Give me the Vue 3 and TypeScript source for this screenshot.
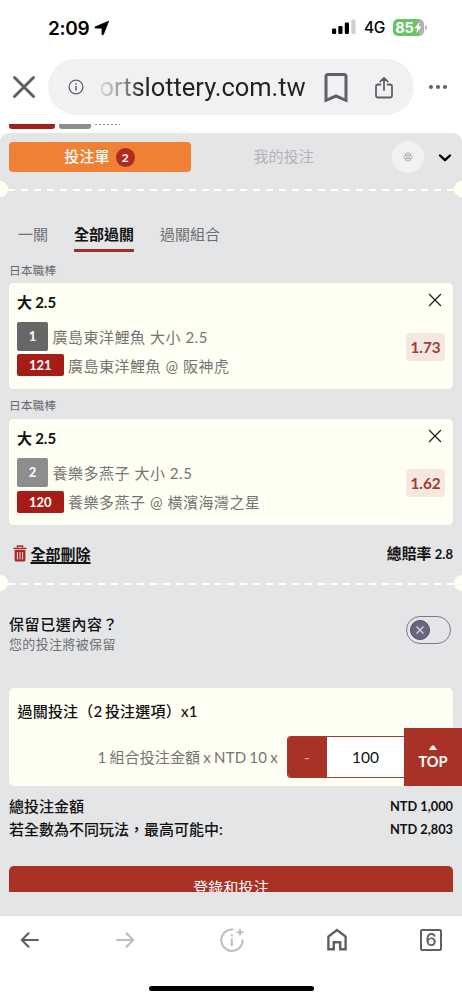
<script setup lang="ts">
interface Pick {
  league: string
  title: string
  no: string
  shade: 'dark' | 'light'
  selection: string
  code: string
  match: string
  odds: string
}

const tabs = ['一關', '全部過關', '過關組合']
const activeTab = '全部過關'

const picks: Pick[] = [
  { league: '日本職棒', title: '大 2.5', no: '1', shade: 'dark', selection: '廣島東洋鯉魚 大小 2.5', code: '121', match: '廣島東洋鯉魚 @ 阪神虎', odds: '1.73' },
  { league: '日本職棒', title: '大 2.5', no: '2', shade: 'light', selection: '養樂多燕子 大小 2.5', code: '120', match: '養樂多燕子 @ 橫濱海灣之星', odds: '1.62' },
]

const totals = [
  { label: '總投注金額', value: 'NTD 1,000' },
  { label: '若全數為不同玩法，最高可能中:', value: 'NTD 2,803' },
]
</script>

<template>
  <div class="screen">
    <header class="status">
      <div class="clock">
        <span>2:09</span>
        <svg width="16" height="16" viewBox="0 0 16 16"><path d="M14.6 1.2 9.3 14.6c-.3.6-1.2.5-1.3-.2V8.1H1.6c-.8 0-.9-1-.2-1.300L14.600 1.200Z" fill="#000" stroke="#000" stroke-width=".8" stroke-linejoin="round" /></svg>
      </div>
      <div class="signals">
        <svg width="24" height="16" viewBox="0 0 24 16">
          <rect x="0" y="9.500" width="4.200" height="5.500" rx="1.200" />
          <rect x="6.300" y="7" width="4.200" height="8" rx="1.200" />
          <rect x="12.800" y="3.600" width="4.200" height="11.400" rx="1.200" />
          <rect x="19.300" y="0.500" width="4.200" height="14.500" rx="1.200" fill="#cfcfcf" />
        </svg>
        <span class="network">4G</span>
        <div class="battery">
          <span>85</span>
          <svg width="8" height="13" viewBox="0 0 8 13"><path d="M5.600 .6.5 7.200h2.700l-.9 5.200 5.200-6.800H4.700z" fill="#fff" /></svg>
        </div>
        <i class="battery-tip"></i>
      </div>
    </header>

    <div class="address">
      <svg class="close" width="24" height="24" viewBox="0 0 24 24"><path d="M2.500 2.500l19 19M21.500 2.500l-19 19" stroke="#5f6063" stroke-width="3" stroke-linecap="round" /></svg>
      <div class="pill">
        <svg width="16" height="16" viewBox="0 0 16 16" fill="none" stroke="#5f6063"><circle cx="8" cy="8" r="6.900" stroke-width="1.300" /><path d="M8 7v4.600M8 4.200v1.500" stroke-width="1.500" /></svg>
        <span class="url">ortslottery.com.tw</span>
        <svg class="bookmark" width="26" height="32" viewBox="0 0 26 32" fill="none" stroke="#5f6063" stroke-width="3"><path d="M3 28.300V4.500Q3 2.500 5 2.500h16q2 0 2 2v23.800L13 24z" /></svg>
        <svg class="share" width="20" height="24" viewBox="0 0 20 24" fill="none" stroke="#5f6063" stroke-width="1.800" stroke-linecap="round" stroke-linejoin="round"><path d="M6.500 8.500H4Q2 8.500 2 10.500v9q0 2 2 2h12q2 0 2-2v-9q0-2-2-2h-2.500M10 14V2.300M6.200 5.600L10 1.800l3.800 3.800" /></svg>
      </div>
      <div class="dots"><i></i><i></i><i></i></div>
    </div>

    <main class="page">
      <div class="behind">
        <i class="chip red"></i><i class="chip gray"></i><i class="sliver"></i>
      </div>

      <section class="slip">
        <div class="top-tabs">
          <button class="slip-tab"><span>投注單</span><b>2</b></button>
          <span class="my-bets">我的投注</span>
          <span class="gear">
            <svg width="10" height="10" viewBox="0 0 10 10" fill="none" stroke="#a2a4a7" stroke-width=".8"><path d="M3.200 1.200h3.600L9.200 5 6.800 8.800H3.200L.8 5zM1.500 3.200h7M1.500 6.800h7" /><circle cx="5" cy="5" r="1.400" /></svg>
          </span>
          <svg class="chevron" width="14" height="10" viewBox="0 0 14 10" fill="none" stroke="#000" stroke-width="2.400" stroke-linecap="round" stroke-linejoin="round"><path d="M2 2.500l5 4.700 5-4.700" /></svg>
        </div>

        <div class="perforation"></div>

        <nav class="modes">
          <span v-for="tab in tabs" :key="tab" :class="{ active: tab === activeTab }">{{ tab }}</span>
        </nav>

        <template v-for="pick in picks" :key="pick.code">
          <div class="league">{{ pick.league }}</div>
          <article class="card">
            <div class="card-main">
              <h3>{{ pick.title }}</h3>
              <div class="line"><span class="num" :class="pick.shade">{{ pick.no }}</span>{{ pick.selection }}</div>
              <div class="line second"><span class="code">{{ pick.code }}</span>{{ pick.match }}</div>
            </div>
            <div class="card-side">
              <svg width="14" height="14" viewBox="0 0 14 14"><path d="M1 1l12 12M13 1L1 13" stroke="#222" stroke-width="1.300" /></svg>
              <span class="odds">{{ pick.odds }}</span>
            </div>
          </article>
        </template>

        <div class="summary">
          <svg width="14" height="17" viewBox="0 0 14 17"><path d="M4.500 2.600V1h5v1.600M.5 3.400h13" fill="none" stroke="#a62a25" stroke-width="1.500" /><path d="M1.600 5h10.800v10q0 1.500-1.500 1.500H3.100Q1.600 16.500 1.600 15z" fill="#a62a25" /><path d="M4.400 7v7.500M7 7v7.500M9.600 7v7.500" stroke="#eee4e4" /></svg>
          <a>全部刪除</a>
          <b>總賠率 <span>2.8</span></b>
        </div>

        <div class="perforation"></div>

        <div class="keep">
          <div>
            <strong>保留已選內容？</strong>
            <p>您的投注將被保留</p>
          </div>
          <div class="toggle">
            <span><svg width="10" height="10" viewBox="0 0 10 10"><path d="M1.500 1.500l7 7M8.500 1.500l-7 7" stroke="#d9d9e4" stroke-width="1.200" /></svg></span>
          </div>
        </div>

        <div class="stake-card">
          <h4>過關投注（2 投注選項）x1</h4>
          <div class="stake">
            <span class="formula">1 組合投注金額 x NTD 10 x</span>
            <div class="stepper"><button>-</button><span>100</span></div>
          </div>
          <div class="to-top">
            <svg width="8" height="5" viewBox="0 0 8 5"><path d="M0 5Q.5 4 2.700 1 4-.6 5.300 1L8 5z" fill="#fff" /></svg>
            <span>TOP</span>
          </div>
        </div>

        <dl class="totals">
          <div v-for="row in totals" :key="row.label"><dt>{{ row.label }}</dt><dd>{{ row.value }}</dd></div>
        </dl>

        <div class="login-clip"><button class="login">登錄和投注</button></div>
      </section>
    </main>

    <footer class="toolbar">
      <div class="tools">
        <svg width="20" height="18" viewBox="0 0 20 18" fill="none" stroke="#5f6063" stroke-width="2.100" stroke-linecap="round" stroke-linejoin="round"><path d="M18 9H2M8.500 2.300L1.800 9l6.700 6.700" /></svg>
        <svg width="20" height="18" viewBox="0 0 20 18" fill="none" stroke="#bdbdbf" stroke-width="2.100" stroke-linecap="round" stroke-linejoin="round"><path d="M2 9h16M11.500 2.300L18.200 9l-6.700 6.700" /></svg>
        <svg width="26" height="26" viewBox="0 0 26 26" fill="none" stroke="#bdbdbf" stroke-width="2"><path d="M13.500 2.500A10.700 10.700 0 1 0 23.700 13.300" stroke-linecap="round" /><path d="M12.800 11.500v7.500M12.800 7v2.500" /><path d="M21 1l1.300 3L25.500 5.300l-3.200 1.300L21 9.800l-1.300-3.200-3.200-1.300L19.700 4z" fill="#bdbdbf" stroke="none" /></svg>
        <svg width="22" height="24" viewBox="0 0 22 24" fill="none" stroke="#5f6063" stroke-width="2.400"><path d="M2.400 21.300V8.500L11 2l8.600 6.500v12.800h-5.400v-7H7.800v7z" /></svg>
        <span class="tab-count">6</span>
      </div>
      <div class="home-bar"></div>
    </footer>
  </div>
</template>

<style>
body { margin: 0; }
</style>

<style scoped>
.screen { width: 462px; height: 1000px; display: flex; flex-direction: column; overflow: hidden; background: #fff; font-family: Lato, "Noto Sans CJK TC", sans-serif; color: #111; }
.screen * { box-sizing: border-box; }
svg { display: block; flex: none; }
button { border: 0; padding: 0; font: inherit; color: inherit; }
h3, h4, p, dl, dd { margin: 0; }

.status { height: 59px; flex: none; display: flex; justify-content: space-between; padding: 17px 35px 0 48px; font-family: Inter, sans-serif; color: #000; }
.clock { display: flex; align-items: center; gap: 5px; height: 22px; font-size: 19px; font-weight: 600; letter-spacing: -.35px; }
.signals { display: flex; align-items: center; height: 20px; }
.network { margin-left: 8px; width: 22px; font-size: 15.500px; font-weight: 500; letter-spacing: -.4px; }
.battery { margin-left: 7px; width: 31px; height: 17px; border-radius: 5px; display: flex; align-items: center; justify-content: center; background: linear-gradient(90deg, #69c466 84%, #b1b1b3 84%); color: #fff; font-size: 14.500px; font-weight: 700; }
.battery span { letter-spacing: -.2px; }
.battery-tip { width: 2px; height: 5px; margin-left: 1px; border-radius: 0 2px 2px 0; background: #b8b8ba; }

.address { height: 56px; flex: none; display: flex; align-items: center; padding-left: 11.500px; }
.pill { margin-left: 12px; width: 366.500px; height: 56px; border-radius: 28px; background: #f0f1f3; display: flex; align-items: center; padding-left: 20px; }
.url { margin-left: 16px; width: 209px; white-space: nowrap; font-family: Roboto, sans-serif; font-size: 25.500px; line-height: 36px; letter-spacing: -.05px; background: linear-gradient(90deg, #dadbdd 0, #8d8e90 24px, #222 42px); -webkit-background-clip: text; background-clip: text; color: transparent; }
.bookmark { margin-left: 14.500px; margin-top: 1px; }
.share { margin-left: 25px; margin-top: 1px; }
.dots { display: flex; gap: 3px; margin-left: 15px; }
.dots i { width: 4px; height: 4px; border-radius: 50%; background: #5f6063; }

.page { height: 800px; flex: none; display: flex; flex-direction: column; }
.behind { height: 18px; flex: none; display: flex; gap: 4px; padding: 9px 0 0 8.500px; }
.chip { height: 4.500px; border-radius: 0 0 3px 3px; }
.red { width: 46.500px; background: #a3211c; }
.gray { width: 31.500px; background: #8d8d8d; }
.sliver { width: 25px; height: 1px; background: repeating-linear-gradient(90deg, #999 0 2px, #fff 2px 4px); }
.slip { flex: 1; background: #e4e5e7; border-radius: 9px 9px 0 0; display: flex; flex-direction: column; }

.top-tabs { height: 48px; flex: none; display: flex; align-items: center; padding-left: 8.500px; }
.slip-tab { width: 182px; height: 30px; border-radius: 4px; background: #ee8133; color: #fff; font-size: 15px; font-weight: 500; letter-spacing: .2px; display: flex; align-items: center; justify-content: center; gap: 6px; }
.slip-tab > span { margin-top: -3px; }
.slip-tab b { width: 19px; height: 19px; border-radius: 50%; background: #b02a20; font-size: 12px; line-height: 19px; text-align: center; letter-spacing: 0; }
.my-bets { margin-left: 63px; margin-top: -3px; width: 62px; color: #b2b3b5; font-size: 15px; letter-spacing: .1px; white-space: nowrap; }
.gear { margin-left: 76px; width: 32px; height: 32px; border-radius: 50%; background: #f1f2f3; display: grid; place-items: center; }
.chevron { margin-left: 14.500px; margin-top: 1px; }

.perforation { height: 16px; flex: none; background: radial-gradient(circle at 0 50%, #fffff4 7.700px, transparent 8.300px), radial-gradient(circle at 100% 50%, #fffff4 7.700px, transparent 8.300px), repeating-linear-gradient(90deg, #fff 0 7px, transparent 7px 12.900px) 8px 8px / 446px 2px no-repeat; }

.modes { height: 65px; flex: none; display: flex; align-items: flex-start; gap: 26px; padding: 22px 0 0 18px; font-size: 15px; color: #6d6e70; line-height: 30px; }
.modes span { height: 33px; }
.modes .active { font-weight: 700; color: #111; border-bottom: 3px solid #a62c26; }
.league { height: 30.400px; flex: none; padding: 8px 0 0 9px; font-size: 11.800px; line-height: 18px; color: #6a6b6d; }
.modes + .league { height: 21px; padding-top: 0; margin-top: -.2px; }
.card { height: 106px; flex: none; margin: 0 9px; padding: 8px 8px 0 8px; border-radius: 5px; background: #fffff4; display: flex; justify-content: space-between; }
.card h3 { height: 22px; line-height: 22px; font-size: 15px; font-weight: 700; word-spacing: -.5px; }
.line { display: flex; align-items: center; height: 29px; margin-top: 9px; font-size: 15px; letter-spacing: .52px; white-space: nowrap; color: #747572; }
.line.second { height: 22px; margin-top: 3.500px; }
.num, .code { color: #fff; text-align: center; font-weight: 700; border-radius: 2px; letter-spacing: 0; }
.num { width: 31px; height: 29px; line-height: 29px; font-size: 13px; margin-right: 4.500px; }
.num.dark { background: #676767; }
.num.light { background: #8d8d8d; }
.code { width: 46.500px; height: 22px; line-height: 22px; font-size: 13px; background: #a61d18; margin-right: 4.500px; }
.card-side { display: flex; flex-direction: column; align-items: flex-end; }
.card-side svg { margin: 2px 3px 0 0; }
.odds { width: 39px; height: 28px; margin-top: 26px; border-radius: 4px; background: #f4e8e0; color: #a63a35; font-size: 15.300px; font-weight: 700; line-height: 28px; text-align: center; }

.summary { height: 49.600px; flex: none; display: flex; align-items: center; padding: 7px 9px 0 12.500px; font-size: 15px; line-height: 20px; }
.summary a { margin-left: 4px; font-weight: 700; text-decoration: underline; text-underline-offset: 2px; text-decoration-thickness: 1.500px; }
.summary b { margin-left: auto; font-size: 14.800px; }
.summary b span { font-size: 13px; }

.keep { height: 97.200px; flex: none; display: flex; justify-content: space-between; padding: 23px 11px 0 9px; }
.keep strong { display: block; height: 20px; line-height: 20px; font-size: 15px; font-weight: 500; letter-spacing: .6px; }
.keep p { font-size: 13px; line-height: 20px; color: #6d6e70; letter-spacing: .35px; }
.toggle { width: 45px; height: 28px; margin-top: 2px; border: 1px solid #78788d; border-radius: 14px; padding: 3px; }
.toggle span { display: grid; place-items: center; width: 20px; height: 20px; border-radius: 50%; background: #69677f; border: 1px solid #4e4d66; }

.stake-card { position: relative; height: 98px; flex: none; margin: 0 9px; padding: 12px 0 0 8.500px; border-radius: 5px; background: #fffff4; }
.stake-card h4 { height: 22px; line-height: 22px; font-size: 15px; font-weight: 500; letter-spacing: .2px; word-spacing: -1.500px; }
.stake { display: flex; align-items: center; margin-top: 14px; }
.formula { width: 181px; margin-left: 80px; font-size: 15px; color: #747572; white-space: nowrap; letter-spacing: .12px; word-spacing: -.8px; }
.stepper { margin-left: 8px; width: 126px; height: 42px; border: 1px solid #a63a30; border-right: 0; border-radius: 4px 0 0 4px; display: flex; background: #fff; overflow: hidden; font-size: 15.500px; line-height: 40px; }
.stepper button { width: 39px; background: #a83226; color: #e4aaa0; }
.stepper span { width: 78px; text-align: center; }
.to-top { position: absolute; left: 395px; bottom: 0; width: 58px; height: 58px; background: #a83226; color: #fff; display: flex; flex-direction: column; align-items: center; padding-top: 17px; }
.to-top span { margin-top: 2px; font-size: 14.500px; line-height: 20px; font-weight: 700; }

.totals { height: 80px; flex: none; padding: 9px 9px 0; }
.totals div { display: flex; justify-content: space-between; height: 23px; line-height: 22px; font-size: 15px; font-weight: 500; }
.totals dd { font-size: 12.800px; font-weight: 700; }
.login-clip { height: 26px; flex: none; margin: 0 9px; overflow: hidden; }
.login { display: block; width: 100%; height: 42px; border-radius: 5px; background: #a83226; color: #fff; font-size: 15px; letter-spacing: .1px; }

.toolbar { flex: 1; background: #fff; border-top: 1px solid #dedede; }
.tools { height: 47px; display: grid; grid-template-columns: 60px 130px 84px 125px 64px; align-items: center; justify-items: center; }
.tab-count { width: 22px; height: 22px; border: 2.200px solid #5f6063; border-radius: 2px; color: #5f6063; font: 500 17.500px/18px Inter, sans-serif; text-align: center; }
.home-bar { width: 165px; height: 5px; margin: 23px auto 0; border-radius: 3px; background: #000; }
</style>
